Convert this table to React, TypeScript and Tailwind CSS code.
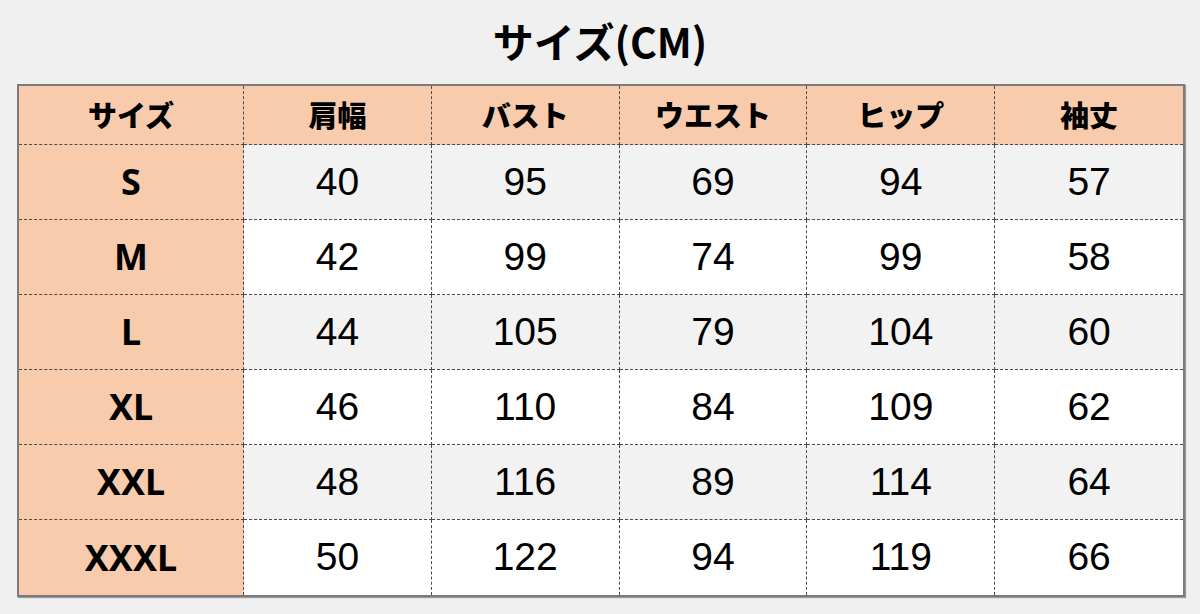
import React from "react";

const headers = ["サイズ", "肩幅", "バスト", "ウエスト", "ヒップ", "袖丈"];
const rows: [string, number[]][] = [
  ["S", [40, 95, 69, 94, 57]],
  ["M", [42, 99, 74, 99, 58]],
  ["L", [44, 105, 79, 104, 60]],
  ["XL", [46, 110, 84, 109, 62]],
  ["XXL", [48, 116, 89, 114, 64]],
  ["XXXL", [50, 122, 94, 119, 66]],
];

export default function App() {
  return (
    <div className="w-[1200px] h-[614px] bg-[#f0f0f0] flex flex-col">
      <div className="h-[84px] flex items-center justify-center pb-[4px]">
        <h1 className="text-[41px] font-bold text-black leading-none font-['Noto_Sans_CJK_JP','Noto_Sans',sans-serif]">
          サイズ(CM)
        </h1>
      </div>
      <div className="ml-[17px] w-[1168px] border-2 border-[#7a7a7a] grid grid-cols-[225px_repeat(5,1fr)] grid-rows-[59px_repeat(6,75px)] shadow-[1px_1px_1px_rgba(0,0,0,0.35)]">
        {headers.map((h, i) => (
          <div
            key={h}
            className={`bg-[#f8cbad] flex items-center justify-center border-b border-dashed border-[#4a4a4a] text-[29px] font-black text-black font-['Noto_Sans_CJK_JP','Noto_Sans',sans-serif] ${i < 5 ? "border-r" : ""}`}
          >
            {h}
          </div>
        ))}
        {rows.map(([size, vals], ri) => {
          const last = ri === rows.length - 1;
          const bg = ri % 2 === 0 ? "bg-[#f2f2f2]" : "bg-white";
          return (
            <React.Fragment key={size}>
              <div
                className={`bg-[#f8cbad] flex items-center justify-center border-r border-dashed border-[#4a4a4a] text-[36px] font-bold text-black font-['Noto_Sans','Noto_Sans_CJK_JP',sans-serif] ${last ? "" : "border-b"}`}
              >
                {size}
              </div>
              {vals.map((v, ci) => (
                <div
                  key={ci}
                  className={`${bg} flex items-center justify-center border-dashed border-[#4a4a4a] text-[39px] text-black font-['Liberation_Sans',Arial,sans-serif] ${ci < 4 ? "border-r" : ""} ${last ? "" : "border-b"}`}
                >
                  {v}
                </div>
              ))}
            </React.Fragment>
          );
        })}
      </div>
    </div>
  );
}
